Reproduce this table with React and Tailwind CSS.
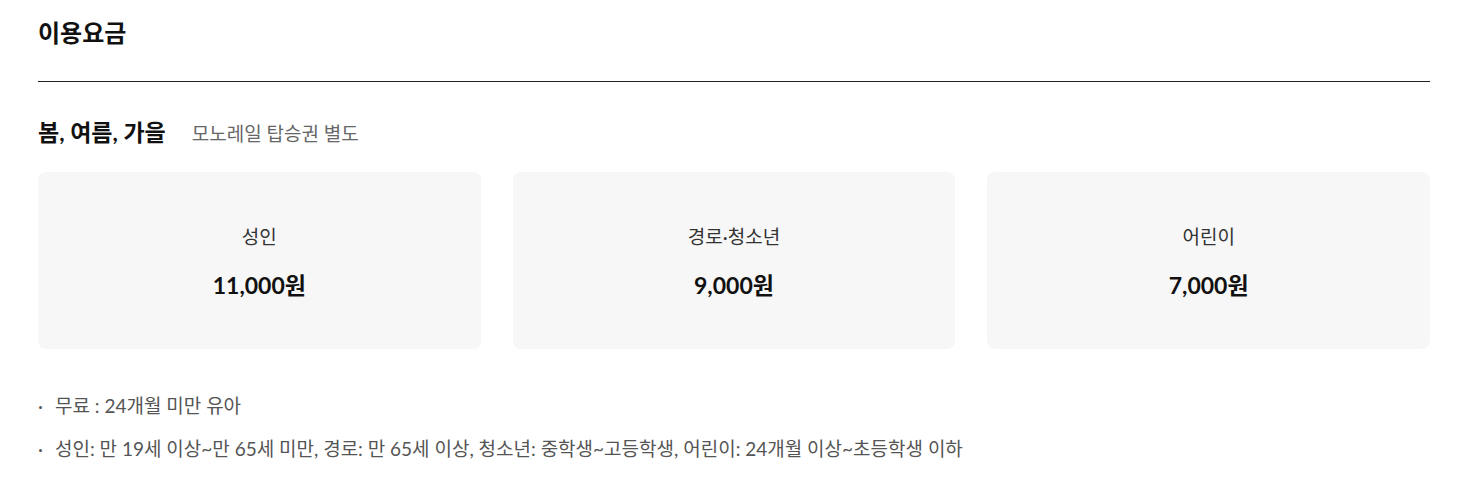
const prices = [
  { label: "성인", price: "11,000원" },
  { label: "경로·청소년", price: "9,000원" },
  { label: "어린이", price: "7,000원" },
];

const notes = [
  "무료 : 24개월 미만 유아",
  "성인: 만 19세 이상~만 65세 미만, 경로: 만 65세 이상, 청소년: 중학생~고등학생, 어린이: 24개월 이상~초등학생 이하",
];

export default function App() {
  return (
    <div className="min-h-[486px] bg-white pl-[38px] pr-[30px] pt-[16px] font-['Lato','Noto_Sans_CJK_KR',sans-serif] text-[#111]">
      <h2 className="pb-[31px] text-[24px] font-bold leading-[34px]">이용요금</h2>
      <div className="h-px bg-[#222]" />

      <div className="mt-[34px] flex items-baseline gap-[26px]">
        <h3 className="text-[23px] font-bold leading-[32px]">봄, 여름, 가을</h3>
        <span className="text-[19px] text-[#666]">모노레일 탑승권 별도</span>
      </div>

      <div className="mt-[23px] grid grid-cols-3 gap-[32px]">
        {prices.map((p) => (
          <div
            key={p.label}
            className="flex h-[177px] flex-col items-center justify-center rounded-lg bg-[#f7f7f7] pt-[3px]"
          >
            <span className="text-[19px] leading-[26px] text-[#333]">{p.label}</span>
            <strong className="mt-[20px] text-[23px] font-bold leading-[30px] text-[#111]">
              {p.price}
            </strong>
          </div>
        ))}
      </div>

      <ul className="mt-[44px] flex flex-col gap-[17px]">
        {notes.map((n) => (
          <li key={n} className="flex text-[19px] leading-[26px] text-[#555]">
            <span className="w-[17px] shrink-0">·</span>
            <span>{n}</span>
          </li>
        ))}
      </ul>
    </div>
  );
}
